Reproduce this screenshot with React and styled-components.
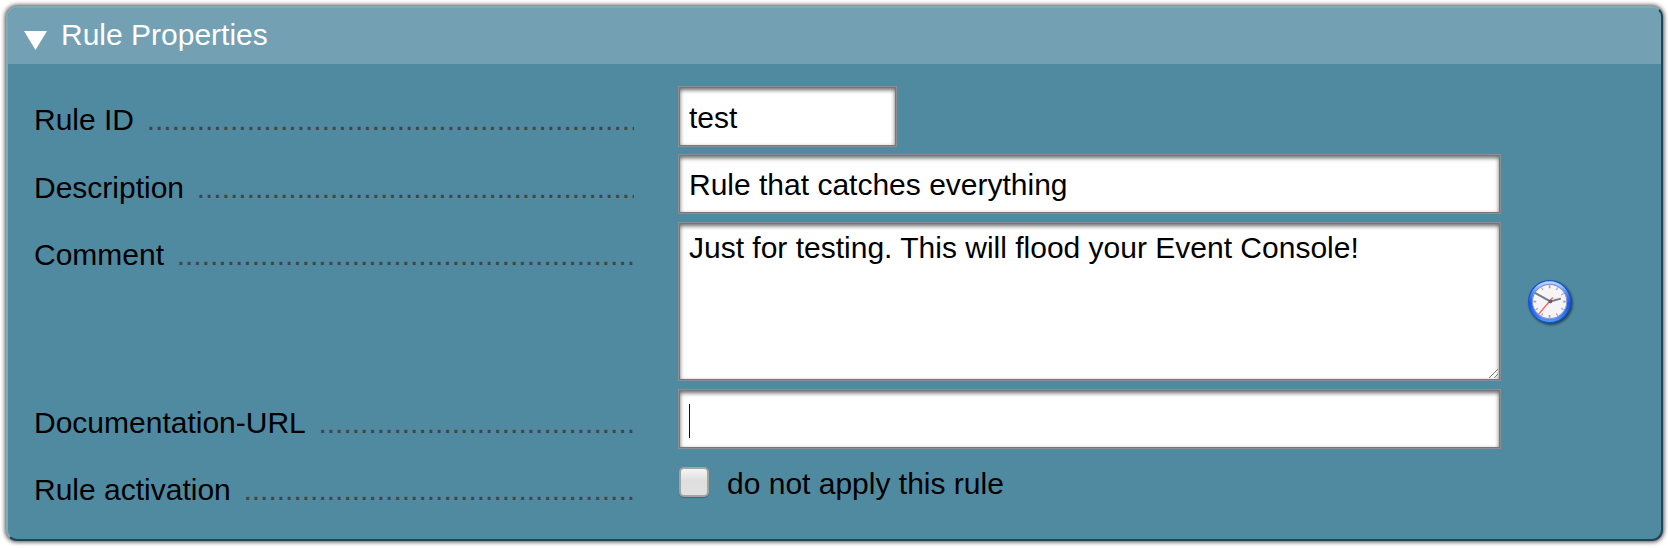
import React from "react";
import styled, { createGlobalStyle } from "styled-components";

const GlobalStyle = createGlobalStyle`
  *, *::before, *::after { box-sizing: border-box; }
  body {
    margin: 0;
    background: #fff;
    font: 30px/34px "Liberation Sans", Arial, sans-serif;
    color: #000;
  }
`;

const Page = styled.main`
  height: 548px;
  padding: 6px 5px 7px 6px;
`;

const Panel = styled.section`
  height: 535px;
  border: 2px solid;
  border-color: #80a9b9 #214556 #214556 #80a9b9;
  border-radius: 11px;
  background: #508aa0;
  box-shadow: 0 0 4px 1px rgba(40, 32, 32, 0.8);
`;

const Header = styled.header`
  display: flex;
  height: 56px;
  padding: 10px 0 0 16px;
  border-radius: 9px 9px 0 0;
  background: #74a0b3;
  color: #fff;
`;

const Arrow = styled.svg`
  width: 23px;
  height: 19px;
  margin: 13px 14px 0 0;
  fill: #fff;
`;

const Form = styled.div`
  display: flex;
  flex-direction: column;
  gap: 8px;
  padding: 22px 0 0 26px;
`;

const Row = styled.div`
  display: flex;
  align-items: flex-start;
  height: ${(p) => p.$height}px;
`;

const Label = styled.div`
  display: flex;
  width: 600px;
  margin-right: 44px;
  padding-top: ${(p) => p.$top}px;
  white-space: nowrap;
`;

const Dots = styled.span`
  flex: 1;
  min-width: 0;
  margin-left: 12.6px;
  overflow: hidden;
  color: #444;
`;

const Field = styled.div`
  width: ${(p) => p.$width}px;
  height: ${(p) => p.$height}px;
  padding: ${(p) => p.$top}px 8px 0 9px;
  border: 2px solid #77777b;
  outline: 1px solid rgba(150, 160, 165, 0.6);
  outline-offset: -1px;
  background: #fff;
  box-shadow: inset 0 2px 4px rgba(0, 0, 0, 0.6);
  white-space: nowrap;
`;

const Area = styled(Field)`
  display: flex;
  justify-content: space-between;
  padding-right: 0;
`;

const Grip = styled.svg`
  align-self: flex-end;
  width: 11px;
  height: 11px;
  stroke: #777;
  fill: none;
`;

const Caret = styled.div`
  width: 1px;
  height: 34px;
  background: #111;
`;

const Clock = styled.svg`
  width: 50px;
  height: 50px;
  margin: 55px 0 0 24px;
`;

const Check = styled.div`
  width: 30px;
  height: 30px;
  margin: 10px 18px 0 1px;
  border: 2px solid #a3a3a3;
  border-radius: 5px;
  background: linear-gradient(#f5f5f5, #dedede 45%, #e1e1e1);
  box-shadow: 0 1px 1px rgba(0, 0, 0, 0.25);
`;

const CheckText = styled.span`
  padding-top: 10px;
`;

function FormRow({ label, dots, height = 60, top = 17, children }) {
  return (
    <Row $height={height}>
      <Label $top={top}>
        <span>{label}</span>
        <Dots>{".".repeat(dots)}</Dots>
      </Label>
      {children}
    </Row>
  );
}

function ClockIcon() {
  const ticks = Array.from({ length: 12 }, (_, i) => i * 30);
  return (
    <Clock viewBox="0 0 50 50">
      <defs>
        <linearGradient id="rim" x1="0" y1="0" x2="0" y2="1">
          <stop offset="0" stopColor="#c4e0ff" />
          <stop offset="0.12" stopColor="#9cc8ff" />
          <stop offset="0.3" stopColor="#4488f5" />
          <stop offset="0.55" stopColor="#1558ee" />
          <stop offset="0.85" stopColor="#2f7cfa" />
          <stop offset="1" stopColor="#55a5ff" />
        </linearGradient>
        <filter id="soft" x="-20%" y="-20%" width="140%" height="140%">
          <feGaussianBlur stdDeviation="1" />
        </filter>
      </defs>
      <circle cx="26" cy="26.2" r="21.8" fill="#10303d" opacity="0.75" filter="url(#soft)" />
      <circle cx="24.6" cy="24.6" r="21" fill="url(#rim)" stroke="#1c50c4" strokeWidth="1.2" />
      <circle cx="24.6" cy="24.6" r="17.2" fill="#f6f4f7" stroke="#8794d0" strokeWidth="1.1" />
      {ticks.map((a) => (
        <path
          key={a}
          d="M24.6 8.4v2.8"
          stroke="#a6a6ae"
          strokeWidth={a % 90 ? 1.2 : 1.8}
          transform={`rotate(${a} 24.6 24.6)`}
        />
      ))}
      <path d="M27.8 20.5L13.6 37.2" stroke="#f56d70" strokeWidth="1.5" />
      <path d="M10 15.8L25.4 24.4L35.8 21.6" stroke="#777b86" strokeWidth="2" fill="none" />
      <circle cx="25.4" cy="24.4" r="1.9" fill="#5c6069" />
    </Clock>
  );
}

export default function App() {
  return (
    <>
      <GlobalStyle />
      <Page>
        <Panel>
          <Header>
            <Arrow viewBox="0 0 23 19">
              <path d="M0 0H23L11.5 19Z" />
            </Arrow>
            <span>Rule Properties</span>
          </Header>
          <Form>
            <FormRow label="Rule ID" dots={59}>
              <Field $width={219} $height={61} $top={13}>test</Field>
            </FormRow>
            <FormRow label="Description" dots={53}>
              <Field $width={823} $height={60} $top={12}>Rule that catches everything</Field>
            </FormRow>
            <FormRow label="Comment" dots={55} height={159} top={16}>
              <Area $width={823} $height={159} $top={7}>
                <span>Just for testing. This will flood your Event Console!</span>
                <Grip viewBox="0 0 11 11">
                  <path d="M1 10L10 1M6 10L10 6" />
                </Grip>
              </Area>
              <ClockIcon />
            </FormRow>
            <FormRow label="Documentation-URL" dots={38}>
              <Field $width={823} $height={60} $top={13}>
                <Caret />
              </Field>
            </FormRow>
            <FormRow label="Rule activation" dots={47} top={16}>
              <Check />
              <CheckText>do not apply this rule</CheckText>
            </FormRow>
          </Form>
        </Panel>
      </Page>
    </>
  );
}
